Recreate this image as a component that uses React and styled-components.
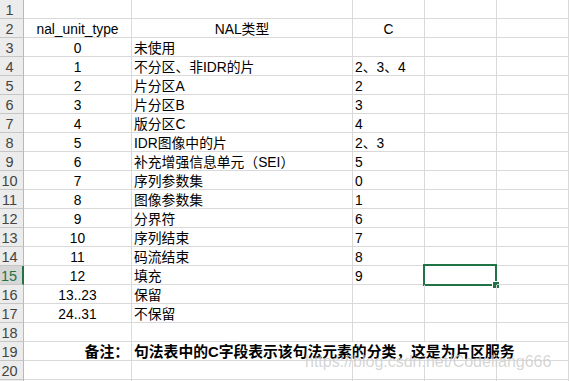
import React from 'react';
import styled, { createGlobalStyle, css } from 'styled-components';

const GlobalStyle = createGlobalStyle`
    html, body {
        margin: 0;
        padding: 0;
        background: #ffffff;
        overflow: hidden;
    }
`;

const GREEN = '#217346';
const GRID = '#d9d9d9';

const Sheet = styled.div`
    position: relative;
    width: 569px;
    height: 381px;
    overflow: hidden;
    font-family: "Liberation Sans", "Noto Sans CJK SC", sans-serif;
    font-size: 13.8px;
    color: #000;
`;

const Row = styled.div`
    display: grid;
    grid-template-columns: 24px 108px 221px 72px 72px 72px;
    height: 19px;
`;

const RowHeader = styled.div`
    box-sizing: border-box;
    display: flex;
    align-items: flex-end;
    justify-content: center;
    padding-right: 4px;
    background: ${p => (p.$active ? '#d6d6d6' : '#ececec')};
    color: ${p => (p.$active ? GREEN : '#444')};
    border-bottom: 1px solid #c6c6c6;
    border-right: ${p => (p.$active ? `2px solid ${GREEN}` : '1px solid #b8b8b8')};
    font-size: 14.5px;
    line-height: 15px;
`;

const Cell = styled.div`
    position: relative;
    box-sizing: border-box;
    display: flex;
    align-items: flex-end;
    justify-content: ${p => p.$align || 'flex-start'};
    padding: 0 2px;
    border-bottom: 1px solid ${GRID};
    border-right: ${p => (p.$open ? 'none' : `1px solid ${GRID}`)};
    white-space: nowrap;
    line-height: 15px;
    ${p => p.$span && css`grid-column: span ${p.$span};`}
    ${p => p.$bold && css`
        font-weight: bold;
        font-size: 14.8px;
    `}
`;

const Selection = styled.div`
    position: absolute;
    top: -2px;
    left: -2px;
    width: 74px;
    height: 22px;
    box-sizing: border-box;
    border: 2px solid ${GREEN};
    pointer-events: none;
`;

const FillHandle = styled.span`
    position: absolute;
    right: -5px;
    bottom: -5px;
    width: 6px;
    height: 6px;
    background: ${GREEN};
    border: 1px solid #ffffff;
`;

const Watermark = styled.div`
    position: absolute;
    left: 305px;
    top: 353px;
    font-family: "Liberation Sans", sans-serif;
    font-size: 16px;
    color: rgba(160, 160, 160, 0.45);
    text-shadow: 0 0 1px rgba(255, 255, 255, 0.8);
    pointer-events: none;
`;

const rows = [
    ['', '', ''],
    ['nal_unit_type', 'NAL类型', 'C'],
    ['0', '未使用', ''],
    ['1', '不分区、非IDR的片', '2、3、4'],
    ['2', '片分区A', '2'],
    ['3', '片分区B', '3'],
    ['4', '版分区C', '4'],
    ['5', 'IDR图像中的片', '2、3'],
    ['6', '补充增强信息单元（SEI）', '5'],
    ['7', '序列参数集', '0'],
    ['8', '图像参数集', '1'],
    ['9', '分界符', '6'],
    ['10', '序列结束', '7'],
    ['11', '码流结束', '8'],
    ['12', '填充', '9'],
    ['13..23', '保留', ''],
    ['24..31', '不保留', ''],
    ['', '', ''],
    'note',
    ['', '', ''],
    ['', '', ''],
];

const ACTIVE_ROW = 15;

function DataRow({ num, cells }) {
    const isHead = num === 2;
    const active = num === ACTIVE_ROW;
    return (
        <Row>
            <RowHeader $active={active}>{num}</RowHeader>
            <Cell $align="center">{cells[0]}</Cell>
            <Cell $align={isHead ? 'center' : 'flex-start'}>{cells[1]}</Cell>
            <Cell $align={isHead ? 'center' : 'flex-start'}>{cells[2]}</Cell>
            <Cell>
                {active && (
                    <Selection>
                        <FillHandle />
                    </Selection>
                )}
            </Cell>
            <Cell />
        </Row>
    );
}

function NoteRow({ num }) {
    return (
        <Row>
            <RowHeader>{num}</RowHeader>
            <Cell $align="flex-end" $bold>备注：</Cell>
            <Cell $span={3} $open $bold>
                句法表中的C字段表示该句法元素的分类，这是为片区服务
            </Cell>
            <Cell />
        </Row>
    );
}

export default function App() {
    return (
        <Sheet>
            <GlobalStyle />
            {rows.map((r, i) =>
                r === 'note'
                    ? <NoteRow key={i} num={i + 1} />
                    : <DataRow key={i} num={i + 1} cells={r} />
            )}
            <Watermark>https://blog.csdn.net/Codeliang666</Watermark>
        </Sheet>
    );
}
